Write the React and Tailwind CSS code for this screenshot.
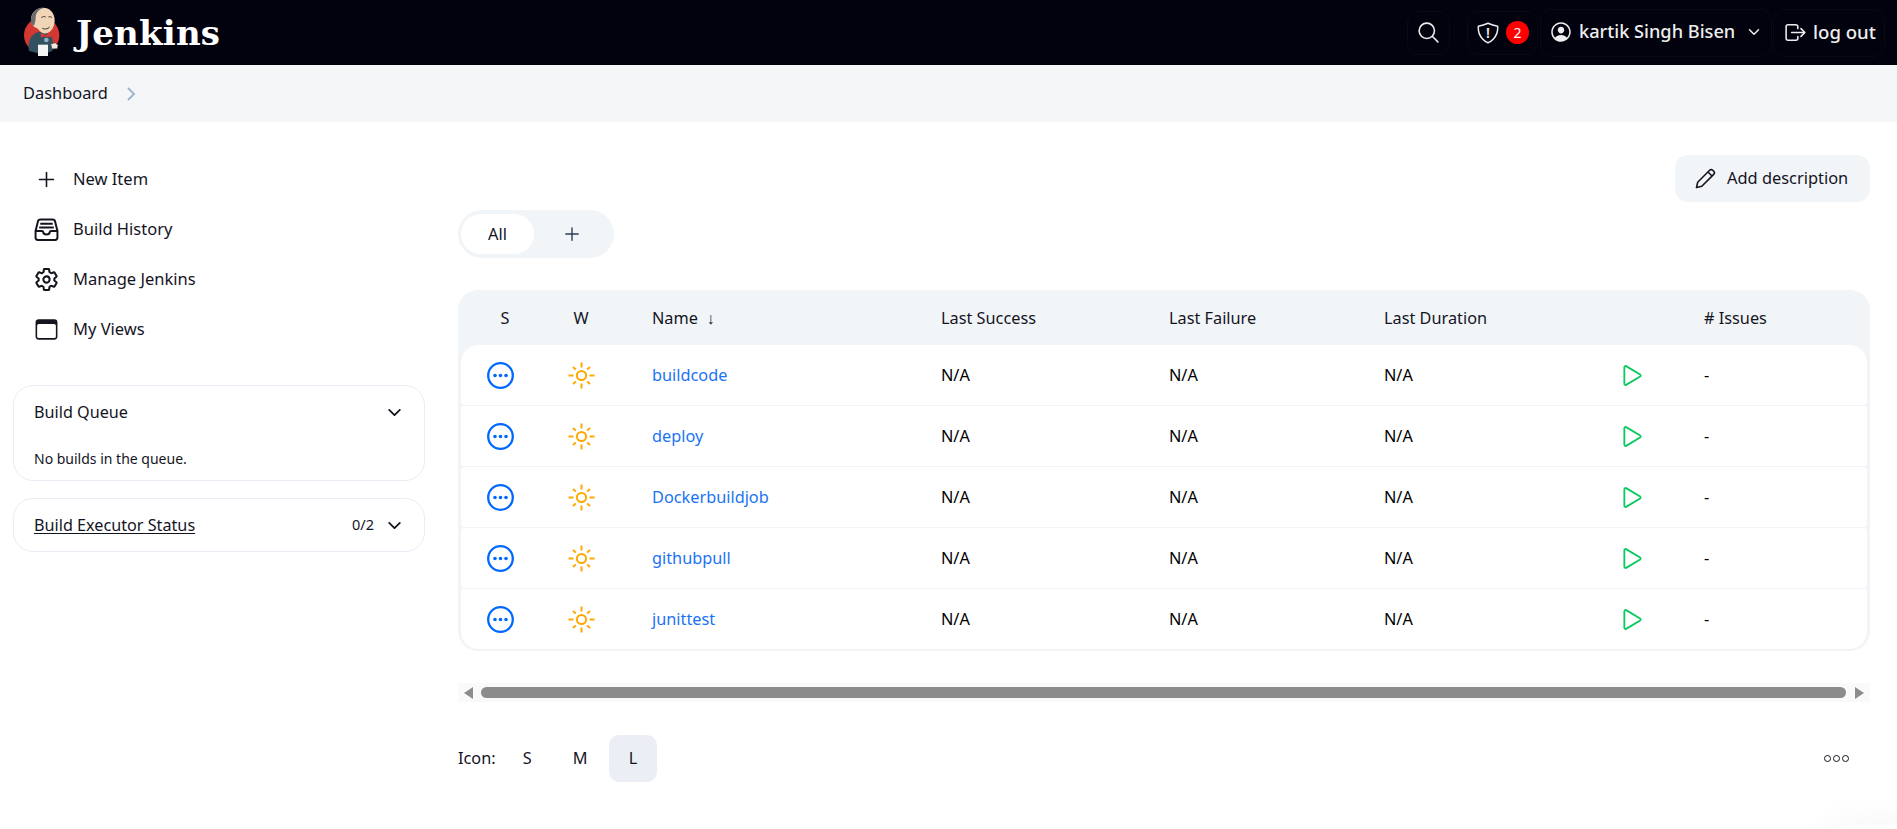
import {
  IoAddOutline,
  IoBrowsersOutline,
  IoChevronDown,
  IoLogOutOutline,
  IoPersonCircleOutline,
  IoPlayOutline,
  IoSearchOutline,
  IoSettingsOutline,
  IoShieldOutline,
} from 'react-icons/io5';

const jobs = ['buildcode', 'deploy', 'Dockerbuildjob', 'githubpull', 'junittest'];

const TrayIcon = () => (
  <svg viewBox="0 0 24 24" fill="none" stroke="currentColor" strokeWidth="1.9" strokeLinejoin="round" width="25" height="25">
    <path d="M1.5 13.5l2.2-9A2.6 2.6 0 0 1 6.2 2.5h11.6a2.6 2.6 0 0 1 2.5 2l2.2 9" />
    <path d="M6 6.5h12M5 10h14" />
    <path d="M1.5 13.5h6.3c.6 0 .9.4 1 .9.2 1.4 1.5 2.3 3.2 2.3s3-.9 3.2-2.3c.1-.5.4-.9 1-.9h6.3v6.2a2.3 2.3 0 0 1-2.3 2.3H3.8a2.3 2.3 0 0 1-2.3-2.3z" />
  </svg>
);

const sideItems = [
  { label: 'New Item', icon: <IoAddOutline className="text-[25px]" /> },
  { label: 'Build History', icon: <TrayIcon /> },
  { label: 'Manage Jenkins', icon: <IoSettingsOutline className="text-[25px] [&_*]:[stroke-width:42]" /> },
  { label: 'My Views', icon: <IoBrowsersOutline className="text-[25px]" /> },
];

const rowGrid = 'grid grid-cols-[79px_82px_319px_228px_215px_233px_86px_1fr] items-center';

const JenkinsLogo = () => (
  <svg width="40" height="53" viewBox="70 10 120 159" className="shrink-0">
    <circle cx="126" cy="98" r="53" fill="#d33833" />
    <path d="M88 145c-4-20 0-42 20-54l12-4 30 6 8 14 2 24-2 14-30 10z" fill="#335061" />
    <path d="M94 52c0-22 16-37 36-37 20 0 33 14 35 34 1 14-4 28-12 36-8 8-20 10-28 4-6-4-10-12-16-14-9-3-15-12-15-23z" fill="#f0d6b7" />
    <path d="M94 62c-3-22 8-44 30-47 4 0 6 1 8 1-14 4-24 14-24 30 0 8-2 12-4 22-4 2-8-2-10-6z" fill="#6d6b6d" />
    <path d="M125 45c5-4 10-4 13-2M146 43c4-2 8-1 11 2M128 77c8 4 16 2 22-4" stroke="#49352d" strokeWidth="3" fill="none" />
    <path d="M122 90l16 7 16-9 2 14-15 2-4-3-13 4z" fill="#d33833" />
    <circle cx="140" cy="112" r="7" fill="#8fb0c4" />
    <path d="M115 126h30v34h-30z" fill="#f4f4f4" />
    <path d="M153 124l14-4 8 8-2 10-16 1z" fill="#f0e9df" stroke="#49352d" strokeWidth="2" />
  </svg>
);

const Sun = () => (
  <svg width="27" height="27" viewBox="0 0 27 27" fill="none" stroke="#ffa800" strokeWidth="2">
    <circle cx="13.5" cy="13.5" r="4.6" />
    <path d="M13.5 .5v5M13.5 21.5v5M.5 13.5h5M21.5 13.5h5M5 5l2.8 2.4M19.2 19.6l2.8 2.4M22 5l-2.8 2.4M7.8 19.6L5 22" />
  </svg>
);

const StatusIcon = () => (
  <svg width="27" height="27" viewBox="0 0 27 27">
    <circle cx="13.5" cy="13.5" r="12.3" fill="none" stroke="#0068ff" strokeWidth="2.3" />
    <circle cx="8" cy="13.5" r="1.8" fill="#0068ff" />
    <circle cx="13.5" cy="13.5" r="1.8" fill="#0068ff" />
    <circle cx="19" cy="13.5" r="1.8" fill="#0068ff" />
  </svg>
);

const PencilIcon = () => (
  <svg width="21" height="21" viewBox="0 0 21 21" fill="none" stroke="currentColor" strokeWidth="1.6" strokeLinejoin="round">
    <path d="M1.5 19.5l1.2-5.3L14.6 2.3a2.2 2.2 0 0 1 3.1 0l1 1a2.2 2.2 0 0 1 0 3.1L6.8 18.3z" />
    <path d="M13 4l4 4" />
  </svg>
);

const Header = () => (
  <header className="flex h-[65px] items-center bg-[#02020f] pl-[23px] pr-[12px] text-[#eeeeee]">
    <JenkinsLogo />
    <span className="ml-[13px] font-['DejaVu_Serif',serif] text-[34px] leading-none font-bold tracking-[0.2px] text-white">Jenkins</span>
    <div className="ml-auto flex items-center">
      <div className="flex h-[44px] w-[43px] items-center justify-center rounded-[12px] border border-[#090914]">
        <IoSearchOutline className="text-[25px]" />
      </div>
      <div className="relative ml-[17px] flex h-[44px] w-[71px] items-center rounded-[12px] border border-[#090914] pl-[8px]">
        <IoShieldOutline className="text-[24px]" />
        <span className="absolute left-[18px] top-[12px] text-[14px] leading-[18px] font-semibold">!</span>
        <span className="ml-[6px] flex h-[23px] w-[23px] items-center justify-center rounded-full bg-[#ff0000] text-[14px] text-white">2</span>
      </div>
      <div className="ml-[2px] flex h-[48px] w-[232px] items-center rounded-[12px] border border-[#090914] pl-[8px] pb-[1px]">
        <IoPersonCircleOutline className="text-[24px]" />
        <span className="ml-[6px] text-[18.2px] font-medium whitespace-nowrap">kartik Singh Bisen</span>
        <IoChevronDown className="ml-[11px] text-[16px]" />
      </div>
      <div className="ml-[1px] flex h-[48px] w-[112px] items-center rounded-[12px] border border-[#090914] pl-[9px] pb-[1px]">
        <IoLogOutOutline className="text-[25px]" />
        <span className="ml-[5px] text-[18.6px] font-medium whitespace-nowrap">log out</span>
      </div>
    </div>
  </header>
);

const Sidebar = () => (
  <aside className="w-[458px] shrink-0 pl-[13px]">
    <nav className="flex flex-col pt-[32px]">
      {sideItems.map(({ label, icon }) => (
        <div key={label} className="flex h-[50px] items-center pl-[21px] text-[#14141f]">
          {icon}
          <span className="ml-[14px] text-[16.5px]">{label}</span>
        </div>
      ))}
    </nav>
    <div className="mt-[31px] h-[96px] w-[412px] rounded-[20px] border border-[#e9ecf4] px-[20px] pt-[14px]">
      <div className="flex items-center justify-between text-[#14141f]">
        <span className="text-[16.2px]">Build Queue</span>
        <IoChevronDown className="text-[19px]" />
      </div>
      <p className="mt-[24px] text-[14px] text-[#14141f]">No builds in the queue.</p>
    </div>
    <div className="mt-[17px] flex h-[54px] w-[412px] items-center rounded-[20px] border border-[#e9ecf4] px-[20px] text-[#14141f]">
      <span className="text-[16.2px] underline underline-offset-2">Build Executor Status</span>
      <span className="mr-[11px] ml-auto text-[14.5px]">0/2</span>
      <IoChevronDown className="text-[19px]" />
    </div>
  </aside>
);

const JobTable = () => (
  <div className="mt-[32px] rounded-[20px] bg-[#f2f5f8] px-[3px] pb-[2px]">
    <div className={`${rowGrid} h-[55px] pt-[1px] text-[16.3px] text-[#14141f]`}>
      <span className="pl-[9px] text-center">S</span>
      <span className="text-center">W</span>
      <span className="pl-[30px]">Name&nbsp; ↓</span>
      <span>Last Success</span>
      <span>Last Failure</span>
      <span>Last Duration</span>
      <span />
      <span className="pl-[1px]"># Issues</span>
    </div>
    <div className="flex flex-col gap-[1.5px]">
      {jobs.map((job, i) => (
        <div
          key={job}
          className={`${rowGrid} h-[59.5px] rounded-[4px] bg-white text-[16.3px] text-black ${i === 0 ? 'rounded-t-[18px]' : ''} ${i === jobs.length - 1 ? 'rounded-b-[18px]' : ''}`}
        >
          <span className="mt-[1px] flex justify-center">
            <StatusIcon />
          </span>
          <span className="mt-[1px] flex justify-center">
            <Sun />
          </span>
          <span className="pl-[30px] text-[#1a73f5]">{job}</span>
          <span>N/A</span>
          <span>N/A</span>
          <span>N/A</span>
          <span className="mt-[1px] pl-[1px]">
            <IoPlayOutline className="text-[29px] text-[#0bc95f]" />
          </span>
          <span className="pl-[1px]">-</span>
        </div>
      ))}
    </div>
  </div>
);

const ScrollBar = () => (
  <div className="mt-[32.5px] flex h-[19px] items-center bg-[#fafafa]">
    <span className="ml-[6px] h-0 w-0 border-y-[6px] border-r-[9px] border-y-transparent border-r-[#8c8c8c]" />
    <div className="ml-[8px] h-[11px] flex-1 rounded-full bg-[#8c8c8c]" />
    <span className="mr-[6px] ml-[9px] h-0 w-0 border-y-[6px] border-l-[9px] border-y-transparent border-l-[#8c8c8c]" />
  </div>
);

const IconSizes = () => (
  <div className="mt-[33px] flex items-center text-[16.3px] text-[#14141f]">
    <span className="mr-[7.5px]">Icon:</span>
    {['S', 'M', 'L'].map((size) => (
      <span
        key={size}
        className={`mr-[5px] flex h-[47px] w-[48px] items-center justify-center rounded-[10px] ${size === 'L' ? 'bg-[#ebeef5]' : ''}`}
      >
        {size}
      </span>
    ))}
    <div className="mr-[21px] ml-auto flex gap-[2px]">
      <span className="h-[7px] w-[7px] rounded-full border border-[#14141f]" />
      <span className="h-[7px] w-[7px] rounded-full border border-[#14141f]" />
      <span className="h-[7px] w-[7px] rounded-full border border-[#14141f]" />
    </div>
  </div>
);

const App = () => (
  <div className="relative h-[829px] overflow-hidden bg-white font-['Noto_Sans',sans-serif]">
    <Header />
    <div className="flex h-[57px] items-center bg-[#f5f6f8] pl-[23px] text-[#14141f]">
      <span className="text-[16.4px]">Dashboard</span>
      <svg width="10" height="14" viewBox="0 0 10 14" fill="none" stroke="#9fb3d1" strokeWidth="1.9" className="ml-[18px]">
        <path d="M2 1l6 6-6 6" />
      </svg>
    </div>
    <main className="flex">
      <Sidebar />
      <section className="w-[1412px]">
        <div className="flex justify-end pt-[33px]">
          <div className="flex h-[47px] w-[195px] items-center rounded-[13px] bg-[#f2f5f8] pl-[20px] text-[#14141f]">
            <PencilIcon />
            <span className="ml-[11px] text-[16.4px]">Add description</span>
          </div>
        </div>
        <div className="mt-[8px] flex h-[48px] w-[156px] items-center rounded-full bg-[#f2f5f8] pl-[3px]">
          <div className="flex h-[40px] w-[73px] items-center justify-center rounded-full bg-white text-[16.4px] text-[#14141f]">All</div>
          <IoAddOutline className="ml-[27px] text-[22px] text-[#2e3a55]" />
        </div>
        <JobTable />
        <ScrollBar />
        <IconSizes />
      </section>
    </main>
    <div className="absolute right-[-30px] bottom-[-30px] h-[34px] w-[100px] rounded-tl-[24px] bg-white shadow-[0_0_40px_rgba(0,0,0,0.05)]" />
  </div>
);

export default App;
